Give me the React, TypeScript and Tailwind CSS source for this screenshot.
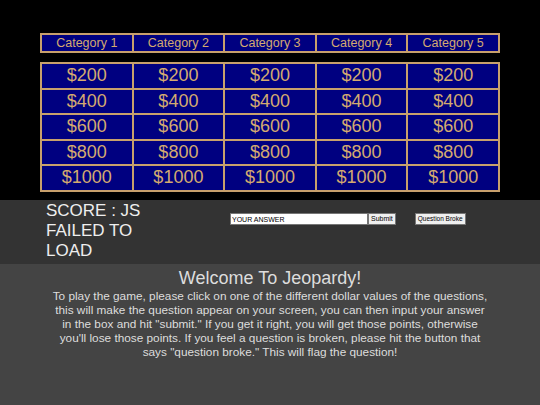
const categories = ['Category 1', 'Category 2', 'Category 3', 'Category 4', 'Category 5'];
const values = [200, 400, 600, 800, 1000];

export default function App() {
  return (
    <div className="w-[540px] h-[405px] flex flex-col font-['Liberation_Sans',Arial,sans-serif]">
      {/* board */}
      <div className="h-[200px] bg-black flex flex-col items-center pt-[33px]">
        <div className="flex border border-[#c8a06c] w-[460px]">
          {categories.map((c) => (
            <div
              key={c}
              className="flex-1 h-[18px] border border-[#c8a06c] bg-[#000080] text-[#d4aa70] text-[12.5px] leading-[16px] text-center"
            >
              {c}
            </div>
          ))}
        </div>
        <div className="mt-[9px] border border-[#c8a06c] w-[460px] flex flex-col">
          {values.map((v) => (
            <div key={v} className="flex">
              {categories.map((c) => (
                <div
                  key={c}
                  className="flex-1 h-[25.6px] border border-[#c8a06c] bg-[#000080] text-[#d4aa70] text-[18px] leading-[23px] text-center cursor-pointer"
                >
                  ${v}
                </div>
              ))}
            </div>
          ))}
        </div>
      </div>

      {/* score + answer */}
      <div className="h-[64px] bg-[#333333] flex items-start">
        <div className="ml-[46px] w-[100px] pt-[1px] text-[#eeeeee] text-[17px] leading-[20px]">
          SCORE : JS FAILED TO LOAD
        </div>
        <div className="ml-[84px] mt-[13px] flex items-start">
          <input
            type="text"
            defaultValue="YOUR ANSWER"
            className="w-[138px] h-[12px] bg-white border border-[#767676] text-black text-[7px] leading-[10px] px-[1px] outline-none"
          />
          <button className="h-[12px] px-[2px] bg-[#efefef] border border-[#767676] text-black text-[7px] leading-[10px]">
            Submit
          </button>
          <button className="ml-[19px] h-[12px] px-[2px] bg-[#efefef] border border-[#767676] text-black text-[6.5px] leading-[10px]">
            Question Broke
          </button>
        </div>
      </div>

      {/* instructions */}
      <div className="flex-1 bg-[#444444] flex flex-col items-center text-[#dddddd]">
        <div className="mt-[3px] text-[18px] leading-[22px]">Welcome To Jeopardy!</div>
        <p className="w-[439px] text-center text-[11.8px] leading-[14px]">
          To play the game, please click on one of the different dollar values of the questions, this will
          make the question appear on your screen, you can then input your answer in the box and hit
          "submit." If you get it right, you will get those points, otherwise you'll lose those points. If
          you feel a question is broken, please hit the button that says "question broke." This will flag
          the question!
        </p>
      </div>
    </div>
  );
}
